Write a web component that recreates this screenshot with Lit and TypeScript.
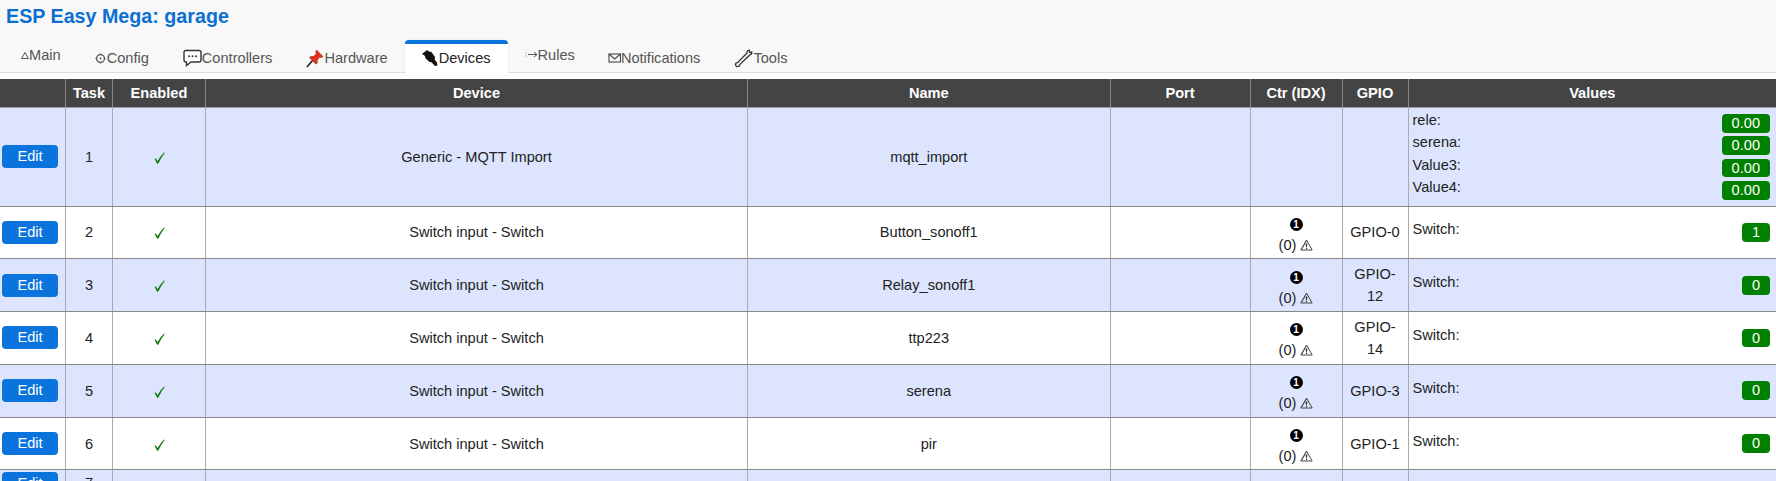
import { LitElement, html, css, svg } from "lit";
import { customElement } from "lit/decorators.js";

const icons: Record<string, unknown> = {
  main: svg`<svg class="ic" style="width:8px;height:16px" viewBox="0 0 8 16"><path d="M.6 12.5 L4 6.5 L7.4 12.5 Z" fill="none" stroke="#555" stroke-width="1"/></svg>`,
  config: svg`<svg class="ic" style="width:13px;height:18px" viewBox="0 0 13 18"><circle cx="6.5" cy="9.5" r="3.9" fill="none" stroke="#555" stroke-width="1.3"/><circle cx="6.5" cy="9.5" r="1" fill="#555"/><path d="M6.5 4.4v1.4M6.5 13.2v1.4M1.4 9.5h1.4M10.2 9.5h1.4" stroke="#555" stroke-width="1.2"/></svg>`,
  controllers: svg`<svg class="ic" style="width:19px;height:18px" viewBox="0 0 19 18"><path d="M3 1.5H16Q18 1.5 18 3.5V11Q18 13 16 13H8L3.5 16.5V13H3Q1 13 1 11V3.5Q1 1.5 3 1.5Z" fill="#fff" stroke="#333" stroke-width="1.4"/><circle cx="6" cy="7.3" r="1" fill="#333"/><circle cx="9.5" cy="7.3" r="1" fill="#333"/><circle cx="13" cy="7.3" r="1" fill="#333"/></svg>`,
  hardware: svg`<svg class="ic" style="width:18px;height:19px" viewBox="0 0 18 19"><path d="M1 18 L7 11" stroke="#222" stroke-width="1.6"/><path d="M10.5 1 L17 7.5 L15 8.6 L13.6 8 L11.2 11.4 L11.4 14 L9.8 15 L3.5 8.8 L4.8 7.4 L7.4 7.6 L10.4 4.8 L9.7 3 Z" fill="#e0301e" stroke="#9c1c10" stroke-width=".6"/></svg>`,
  devices: svg`<svg class="ic" style="width:17px;height:18px" viewBox="0 0 17 18"><path d="M0 5 L5 1 L7 2.5 L9.5 3 L13 8 L12.6 10.5 L15 13.5 L15.5 16.5 L13 17 L9.5 13.2 L7.5 13 L3.5 9.2 L2.8 6.8 Z" fill="#111"/></svg>`,
  rules: svg`<svg class="ic" style="width:13px;height:16px" viewBox="0 0 13 16"><path d="M3 8.5H12M9 6L12 8.5L9 11M1 6.6V7.4M1 9.6V10.4" fill="none" stroke="#555" stroke-width="1"/></svg>`,
  notifications: svg`<svg class="ic" style="width:13px;height:18px" viewBox="0 0 13 18"><rect x="1" y="5" width="11.5" height="8" fill="none" stroke="#444" stroke-width="1.1"/><path d="M1 5L6.7 10L12.5 5" fill="none" stroke="#444" stroke-width="1.1"/></svg>`,
  tools: svg`<svg class="ic" style="width:19px;height:19px" viewBox="0 0 19 19"><path d="M2.6 17.6 L1.4 16.2 L2 14 L3.8 13.4 L13 4 L13.2 2 L15.4 1 L15.6 3.4 L17 3.8 L17.8 2.6 L17.6 5 L15.8 6 L6 15.4 L5.2 17.2 Z" fill="#eee" stroke="#333" stroke-width="1.3" stroke-linejoin="round"/></svg>`,
};
const check = svg`<svg class="chk" viewBox="0 0 11 12"><path d="M.6 7 L1.6 6.2 L3.6 9 Q6 4 10.2 .4 L10.8 .9 Q7 5.5 4.2 11.8 L3.2 11.8 Z" fill="#157a15"/></svg>`;
const warn = svg`<svg class="warn" viewBox="0 0 13 12"><path d="M6.5 1 L12.2 11 H.8 Z" fill="none" stroke="#444" stroke-width="1"/><path d="M5.6 4.4H7.4L6.9 8.4H6.1Z M5.9 9H7.1V10.1H5.9Z" fill="#333"/><path d="M6.5 1.8 L1.6 10.6" stroke="#555" stroke-width=".8"/></svg>`;

const tabs = [
  ["main", "Main", true],
  ["config", "Config", false],
  ["controllers", "Controllers", false],
  ["hardware", "Hardware", false],
  ["devices", "Devices", false],
  ["rules", "Rules", true],
  ["notifications", "Notifications", false],
  ["tools", "Tools", false],
] as const;

interface Row {
  task: number;
  device: string;
  name: string;
  gpio: string;
  values: [string, string][];
  enabled: boolean;
  ctr: boolean;
}
const sw = (task: number, name: string, gpio: string, v: string): Row => ({
  task,
  device: "Switch input - Switch",
  name,
  gpio,
  values: [["Switch:", v]],
  enabled: true,
  ctr: true,
});
const rows: Row[] = [
  {
    task: 1,
    device: "Generic - MQTT Import",
    name: "mqtt_import",
    gpio: "",
    values: [
      ["rele:", "0.00"],
      ["serena:", "0.00"],
      ["Value3:", "0.00"],
      ["Value4:", "0.00"],
    ],
    enabled: true,
    ctr: false,
  },
  sw(2, "Button_sonoff1", "GPIO-0", "1"),
  sw(3, "Relay_sonoff1", "GPIO-12", "0"),
  sw(4, "ttp223", "GPIO-14", "0"),
  sw(5, "serena", "GPIO-3", "0"),
  sw(6, "pir", "GPIO-1", "0"),
  { task: 7, device: "", name: "", gpio: "", values: [], enabled: false, ctr: false },
];

@customElement("app-root")
export class AppRoot extends LitElement {
  static styles = css`
    :host {
      display: block;
      height: 481px;
      overflow: hidden;
      background: #fff;
      font-family: "Liberation Sans", Arial, sans-serif;
      font-size: 14.6px;
      color: #222;
    }
    .top {
      background: #f8f8f8;
      height: 72px;
      border-bottom: 1px solid #ddd;
      box-sizing: content-box;
      display: flex;
      flex-direction: column;
    }
    h1 {
      margin: 0;
      padding: 5px 0 0 6px;
      height: 40px;
      box-sizing: border-box;
      font-size: 19.7px;
      line-height: 23px;
      font-weight: bold;
      color: #0b6fd1;
    }
    nav {
      display: flex;
      padding-left: 4px;
      height: 32px;
    }
    .tab {
      display: flex;
      align-items: flex-start;
      padding: 9px 17px 0;
      color: #555;
      line-height: 18px;
      height: 35px;
      box-sizing: border-box;
      white-space: nowrap;
    }
    .tab.raised {
      padding-top: 6px;
      padding-right: 16px;
    }
    .tab.active {
      background: #fff;
      border-top: 4px solid #0b74dc;
      border-radius: 4px 4px 0 0;
      color: #222;
      padding-top: 5px;
      box-shadow: 0 0 1px #bbb;
    }
    .ic {
      flex: none;
      display: block;
    }
    .table-wrap {
      padding-top: 6px;
    }
    table {
      width: 1776px;
      table-layout: fixed;
      border-collapse: collapse;
    }
    th {
      background: #444;
      color: #fff;
      font-weight: bold;
      height: 28px;
      padding: 0;
      border-left: 1px solid #888;
      border-bottom: 1px solid #999;
      line-height: 16px;
    }
    th:first-child,
    td:first-child {
      border-left: none;
    }
    td {
      padding: 0 2px;
      text-align: center;
      vertical-align: middle;
      border-left: 1px solid #aaa;
      border-bottom: 1px solid #888;
      line-height: 22px;
      color: #222;
      height: 51.8px;
    }
    tr.odd td {
      background: #dce5fd;
    }
    tr.first td {
      height: 97.5px;
    }
    tr.last td {
      height: 26px;
    }
    td.gpio {
      padding: 0 5px;
    }
    .ctr-in {
      padding-top: 3px;
    }
    .edit {
      display: block;
      width: 56px;
      height: 23px;
      background: #0b74dc;
      color: #fff;
      border-radius: 4px;
      line-height: 23px;
      text-align: center;
    }
    .chk {
      display: block;
      width: 11px;
      height: 12px;
      margin: 2px auto 0;
    }
    .warn {
      display: inline-block;
      width: 13px;
      height: 12px;
      vertical-align: -1px;
    }
    .one {
      display: inline-block;
      width: 13px;
      height: 13px;
      border-radius: 50%;
      background: #000;
      color: #fff;
      font-size: 10px;
      font-weight: bold;
      line-height: 13px;
      vertical-align: 0;
    }
    .val {
      display: flex;
      justify-content: space-between;
      align-items: flex-start;
      height: 22.3px;
      line-height: 16px;
      text-align: left;
      padding: 0 6.5px 0 3px;
    }
    .badge {
      background: #008000;
      color: #fff;
      border-radius: 4px;
      height: 18.7px;
      line-height: 19px;
      padding: 0 9.5px;
      margin-top: 2px;
    }
    td.values {
      padding: 0 0 0 1px;
    }
    .single .val {
      height: auto;
      align-items: center;
    }
    .single .val span:first-child {
      margin-top: -6px;
    }
    .single .badge {
      margin-top: 0;
    }
  `;

  render() {
    return html`
      <div class="top">
        <h1>ESP Easy Mega: garage</h1>
        <nav>
          ${tabs.map(
            ([k, label, raised]) => html`<div
              class="tab ${raised ? "raised" : ""} ${k === "devices" ? "active" : ""}"
            >
              ${icons[k]}<span>${label}</span>
            </div>`
          )}
        </nav>
      </div>
      <div class="table-wrap">
        <table>
          <colgroup>
            ${[65.5, 47, 93, 542, 362.5, 140, 92, 66, 368].map(
              (w) => html`<col style="width:${w}px" />`
            )}
          </colgroup>
          <thead>
            <tr>
              ${["", "Task", "Enabled", "Device", "Name", "Port", "Ctr (IDX)", "GPIO", "Values"].map(
                (h) => html`<th>${h}</th>`
              )}
            </tr>
          </thead>
          <tbody>
            ${rows.map(
              (r, i) => html`<tr
                class="${i % 2 === 0 ? "odd" : ""} ${i === 0 ? "first" : ""} ${i === 6 ? "last" : ""}"
              >
                <td><div class="edit">Edit</div></td>
                <td>${r.task}</td>
                <td>${r.enabled ? check : ""}</td>
                <td>${r.device}</td>
                <td>${r.name}</td>
                <td></td>
                <td>
                  ${r.ctr
                    ? html`<div class="ctr-in"><span class="one">1</span><br />(0) ${warn}</div>`
                    : ""}
                </td>
                <td class="gpio">${r.gpio}</td>
                <td class="values ${r.values.length === 1 ? "single" : ""}">
                  ${r.values.map(
                    ([l, v]) => html`<div class="val">
                      <span>${l}</span><span class="badge">${v}</span>
                    </div>`
                  )}
                </td>
              </tr>`
            )}
          </tbody>
        </table>
      </div>
    `;
  }
}
